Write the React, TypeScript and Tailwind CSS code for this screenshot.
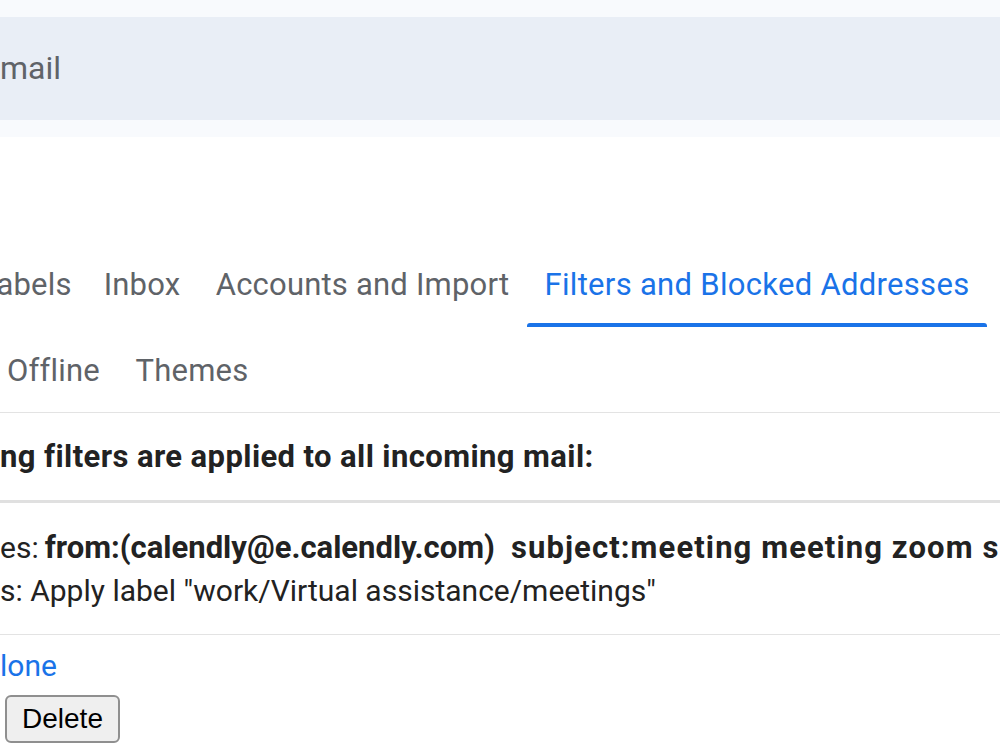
import React from "react";

const topTabs = [
  { label: "abels", width: "w-[104px]", ml: "-ml-[18px]" },
  { label: "Inbox", width: "w-[112px]", ml: "" },
  { label: "Accounts and Import", width: "w-[329px]", ml: "" },
];

const App: React.FC = () => {
  return (
    <div className="w-[1000px] h-[750px] overflow-hidden bg-white font-['Roboto',sans-serif] text-[#1f1f1f]">
      {/* search band */}
      <div className="bg-[#f8fafd] py-[17px]">
        <div className="h-[103px] bg-[#e9eef6] flex items-center">
          <span className="text-[32px] text-[#5f6368] leading-none -mt-[2px]">mail</span>
        </div>
      </div>

      {/* settings tabs */}
      <div className="mt-[128px] flex items-end">
        {topTabs.map((t) => (
          <div key={t.label} className={`${t.width} ${t.ml} shrink-0 flex flex-col`}>
            <span className="text-center text-[31px] tracking-[0.2px] leading-[40px] text-[#5f6368] whitespace-nowrap">{t.label}</span>
            <span className="h-[22px]" />
          </div>
        ))}
        <div className="w-[460px] shrink-0 flex flex-col">
          <span className="text-center text-[31px] tracking-[0.3px] leading-[40px] text-[#1a73e8] whitespace-nowrap">
            Filters and Blocked Addresses
          </span>
          <span className="h-[18px]" />
          <span className="h-[4px] bg-[#1a73e8] rounded-t-[3px]" />
        </div>
      </div>
      <div className="mt-[24px] flex">
        <div className="w-[129px] -ml-[11px] shrink-0 text-center text-[31px] tracking-[0.2px] leading-[40px] text-[#5f6368]">Offline</div>
        <div className="w-[148px] shrink-0 text-center text-[31px] tracking-[0.2px] leading-[40px] text-[#5f6368]">Themes</div>
      </div>
      <div className="mt-[21px] h-px bg-[#e3e3e3]" />

      {/* filters */}
      <div className="mt-[24px] text-[31px] tracking-[0.4px] leading-[40px] font-bold text-[#222] whitespace-nowrap">
        ng filters are applied to all incoming mail:
      </div>
      <div className="mt-[23px] h-[3px] bg-[#e0e0e0]" />
      <div className="mt-[23px] text-[30px] leading-[43px] text-[#222] whitespace-nowrap">
        <div>
          es:<span className="ml-[6px] text-[31px] font-bold">from:(calendly@e.calendly.com)</span>
          <span className="ml-[16px] text-[31px] font-bold tracking-[1.1px]">subject:meeting meeting zoom se</span>
        </div>
        <div>s: Apply label "work/Virtual assistance/meetings"</div>
      </div>
      <div className="mt-[22px] h-px bg-[#e3e3e3]" />
      <div className="mt-[11px] text-[30px] leading-[40px] text-[#1a73e8]">lone</div>
      <div className="mt-[9px] pl-[5px]">
        <button className="h-[48px] w-[115px] rounded-[6px] border-2 border-[#8f8f8f] bg-[#efefef] font-['Liberation_Sans',sans-serif] text-[28px] text-black">
          Delete
        </button>
      </div>
    </div>
  );
};

export default App;
